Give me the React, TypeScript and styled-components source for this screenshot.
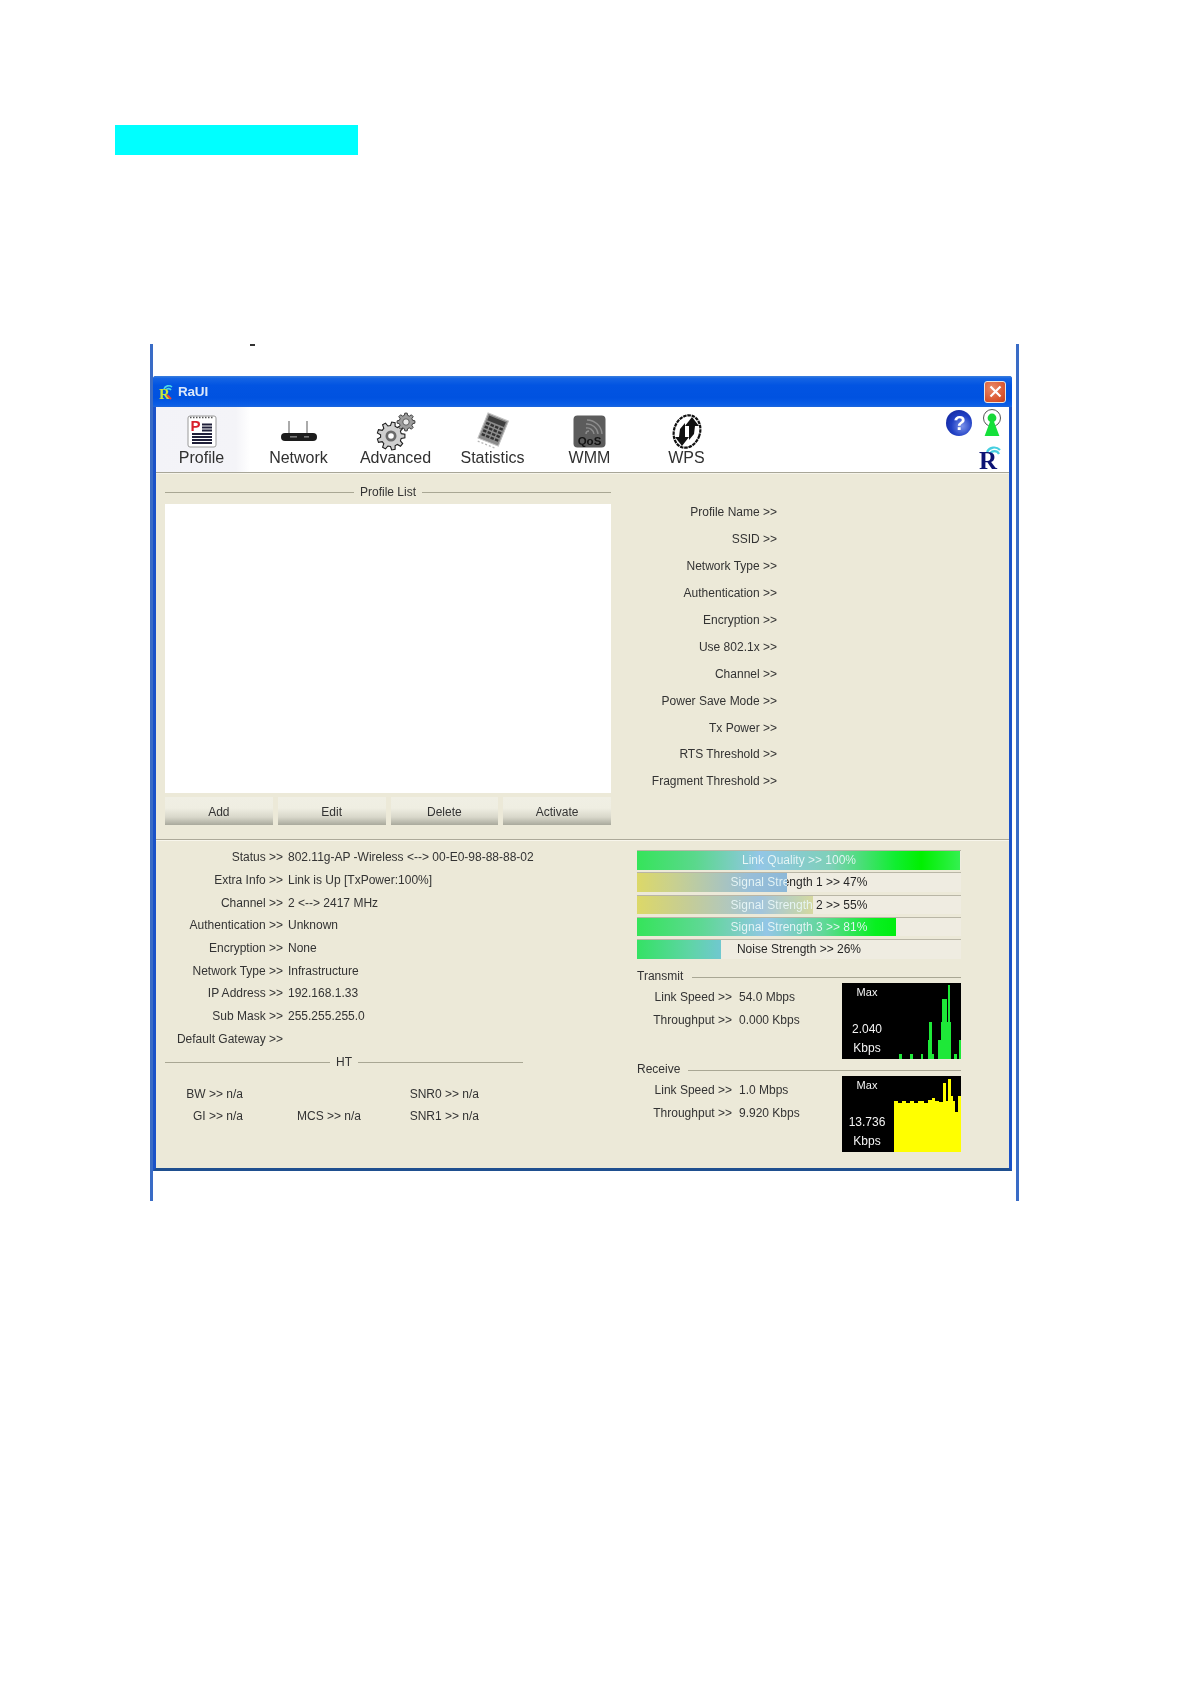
import React from "react";
import styled, { createGlobalStyle } from "styled-components";

const Global = createGlobalStyle`
  html, body { margin: 0; padding: 0; background: #fff; }
  body { font-family: "Liberation Sans", Arial, sans-serif; color: #2a2a2a; }
  * { box-sizing: border-box; }
  svg { overflow: visible; }
`;

const Page = styled.div`
  height: 1684px;
  padding-top: 125px;
  overflow: hidden;
`;
const Highlight = styled.div`
  margin-left: 115px;
  width: 243px;
  height: 30px;
  background: #00ffff;
`;
const Frame = styled.div`
  position: relative;
  margin: 189px 0 0 150px;
  width: 869px;
  height: 857px;
  padding-top: 32px;
  border-left: 3px solid #3a6cc6;
  border-right: 3px solid #3a6cc6;
`;
const Dash = styled.span`
  position: absolute;
  left: 97px;
  top: 0;
  width: 5px;
  height: 2px;
  background: #333;
`;
const Window = styled.div`
  width: 859px;
  height: 795px;
  display: flex;
  flex-direction: column;
  border: 3px solid #1b52c8;
  border-top: 0;
  border-bottom-color: #1f4f8f;
  border-radius: 3px 3px 0 0;
  background: #ece9d8;
  filter: blur(0.35px);
`;
const TitleBar = styled.div`
  flex: none;
  height: 31px;
  margin: 0 -3px;
  padding: 0 6px 0 5px;
  display: flex;
  align-items: center;
  gap: 2px;
  border-radius: 3px 3px 0 0;
  background: linear-gradient(180deg, #3c7fdc 0, #1464e4 8%, #0254e2 30%, #0052e0 70%, #0a5de6 92%, #1c66dc 100%);
`;
const TitleText = styled.span`
  color: #dce8fa;
  font-size: 13.5px;
  font-weight: 700;
  letter-spacing: -0.2px;
`;
const Close = styled.div`
  margin-left: auto;
  width: 22px;
  height: 22px;
  display: flex;
  align-items: center;
  justify-content: center;
  border: 1px solid #e8e4e0;
  border-radius: 3px;
  background: radial-gradient(circle at 35% 30%, #ea8a68, #d8532c 70%, #c2401c);
`;
const Toolbar = styled.div`
  flex: none;
  height: 66px;
  display: flex;
  background: #fff;
  border-bottom: 1px solid #a8a698;
  box-shadow: 0 1px 0 #f6f4ea;
`;
const Tab = styled.div<{ $active?: boolean }>`
  width: ${(p) => (p.$active ? "94px" : "97px")};
  padding-right: ${(p) => (p.$active ? "3px" : "0")};
  display: flex;
  flex-direction: column;
  align-items: center;
  background: ${(p) => (p.$active ? "linear-gradient(90deg,#f3f3f8,#f4f4f8 85%,#ffffff)" : "transparent")};
`;
const TabIcon = styled.div`
  height: 41px;
  padding-top: 8px;
  display: flex;
  align-items: center;
  justify-content: center;
`;
const TabLabel = styled.div`
  margin-top: 1px;
  font-size: 16px;
  line-height: 18px;
  color: #303030;
  white-space: nowrap;
`;
const ToolRight = styled.div`
  margin-left: auto;
  width: 64px;
  display: grid;
  grid-template-columns: 37px 1fr;
  grid-template-rows: 34px 1fr;
  padding-top: 2px;
  justify-items: start;
`;
const RLogoCell = styled.div`
  grid-column: 2;
  margin-left: -4px;
`;
const Upper = styled.div`
  flex: none;
  height: 367px;
  display: flex;
  padding: 12px 0 0 9px;
  border-bottom: 1px solid #aca999;
  box-shadow: 0 1px 0 #f8f6ec;
`;
const ListCol = styled.div`
  width: 446px;
  flex: none;
`;
const Legend = styled.div`
  height: 14px;
  display: flex;
  align-items: center;
  gap: 6px;
  font-size: 12px;
  color: #333;
`;
const Rule = styled.span<{ $down?: number }>`
  flex: 1;
  height: 1px;
  background: #a9a794;
  margin-top: ${(p) => p.$down ?? 0}px;
`;
const ListBox = styled.div`
  margin-top: 5px;
  height: 289px;
  background: #fff;
`;
const Buttons = styled.div`
  margin-top: 4px;
  display: grid;
  grid-template-columns: repeat(4, 1fr);
  gap: 5px;
`;
const Btn = styled.div`
  height: 28px;
  padding-top: 1px;
  display: flex;
  align-items: center;
  justify-content: center;
  font-size: 12px;
  color: #333;
  background: linear-gradient(180deg, #f0efe4 0, #efeee2 40%, #d8d7ca 72%, #a9a99c 100%);
`;
const InfoCol = styled.div`
  width: 166px;
  padding-top: 14px;
  display: grid;
  grid-auto-rows: 26.9px;
  align-items: center;
  text-align: right;
  font-size: 12px;
  color: #333;
`;
const Lower = styled.div`
  flex: 1;
  display: flex;
  padding: 6px 0 0 9px;
`;
const StatusCol = styled.div`
  width: 358px;
  flex: none;
  font-size: 12px;
`;
const StatusRow = styled.div`
  height: 22.7px;
  display: grid;
  grid-template-columns: 118px auto;
  column-gap: 5px;
  align-items: center;
  white-space: nowrap;
  color: #333;
`;
const RowLabel = styled.span`
  text-align: right;
`;
const HtLegend = styled(Legend)`
  margin-top: 5px;
`;
const HtGrid = styled.div`
  margin-top: 13px;
  display: grid;
  grid-template-columns: 78px 118px 118px;
  grid-auto-rows: 22.8px;
  align-items: center;
  text-align: right;
  color: #333;
`;
const MeterCol = styled.div`
  width: 324px;
  margin-left: 114px;
  padding-top: 4px;
  font-size: 12px;
`;
const Bars = styled.div`
  display: grid;
  row-gap: 2.75px;
`;
const Bar = styled.div`
  position: relative;
  height: 19.5px;
  line-height: 19px;
  background: #efece1;
  border-top: 1px solid #b9b6a6;
  white-space: nowrap;
`;
const kinds: Record<string, string> = {
  link: "linear-gradient(90deg,#35e45a 0,#5ad88c 18%,#93c6e6 38%,#7ed0b8 60%,#10ee30 80%,#00f000 88%,#34f050 100%)",
  s1: "linear-gradient(90deg,#dcd868 0,#c8d090 25%,#98bed8 75%,#8cb8d8 100%)",
  s2: "linear-gradient(90deg,#dcd868 0,#c4cc98 30%,#a2c4dc 70%,#c4d4b0 92%,#d6d8a0 100%)",
  s3: "linear-gradient(90deg,#35e45a 0,#5ed894 25%,#93c6e6 50%,#60d898 72%,#08f020 92%,#00ee10 100%)",
  noise: "linear-gradient(90deg,#34e264 0,#60d4a8 65%,#70c8d0 100%)",
};
const Fill = styled.div<{ $kind: string }>`
  position: absolute;
  left: 0;
  top: 0;
  bottom: 0;
  background: ${(p) => kinds[p.$kind]};
`;
/* One text, lying over the fill; its colour changes where the fill ends. */
const BarText = styled.div`
  position: relative;
  text-align: center;
  color: transparent;
  -webkit-background-clip: text;
  background-clip: text;
`;
const MeterHead = styled(Legend)`
  gap: 9px;
  margin-top: 10px;
`;
const RecvHead = styled(MeterHead)`
  margin-top: 3px;
  gap: 8px;
`;
const MeterBody = styled.div`
  display: flex;
`;
const Rates = styled.div`
  width: 205px;
  flex: none;
  padding-top: 3px;
`;
const RateRow = styled.div`
  height: 22.8px;
  display: grid;
  grid-template-columns: 95px auto;
  column-gap: 7px;
  align-items: center;
  white-space: nowrap;
  color: #333;
`;
const Graph = styled.div`
  position: relative;
  width: 119px;
  height: 76px;
  background: #000;
`;
const GraphSvg = styled.svg`
  position: absolute;
  inset: 0;
  display: block;
`;
const GraphLabels = styled.div`
  position: relative;
  width: 50px;
  height: 100%;
  display: flex;
  flex-direction: column;
  align-items: center;
  color: #f4f4f4;
  font-size: 12px;
  line-height: 16px;
`;
const GraphMax = styled.span`
  margin-top: 1px;
  font-size: 11px;
`;
const GraphValue = styled.span`
  margin-top: 21px;
`;
const GraphUnit = styled.span`
  margin-top: 3px;
`;

/* Icons */
function gearPoints(cx: number, cy: number, ro: number, ri: number, n: number) {
  const pts: string[] = [];
  for (let i = 0; i < n; i++) {
    const a = (i / n) * Math.PI * 2;
    const w = (Math.PI / n) * 0.5;
    [
      [ri, a - w * 1.3],
      [ro, a - w * 0.7],
      [ro, a + w * 0.7],
      [ri, a + w * 1.3],
    ].forEach(([r, t]) => pts.push(`${(cx + r * Math.cos(t)).toFixed(1)},${(cy + r * Math.sin(t)).toFixed(1)}`));
  }
  return pts.join(" ");
}

const ProfileIcon = () => (
  <svg width="30" height="33" viewBox="0 0 30 33">
    <rect x="1" y="1" width="28" height="31" rx="2" fill="#fff" stroke="#9a9a9a" />
    <path d="M3 2.5h24" stroke="#555" strokeWidth="1.4" strokeDasharray="1.5 1.5" />
    <text x="3.5" y="16" fontFamily="Liberation Sans" fontWeight="700" fontSize="15" fill="#d8202c">P</text>
    <path d="M15 9.5h10M15 12.5h10M15 15.5h10M5 19h20M5 22h20M5 25h20M5 28h20" stroke="#20203a" strokeWidth="1.8" />
  </svg>
);
const NetworkIcon = () => (
  <svg width="38" height="24" viewBox="0 0 38 24">
    <path d="M9 1v13M27 1v13" stroke="#888" strokeWidth="1.4" />
    <rect x="1" y="13" width="36" height="8" rx="4" fill="#1c1c1c" />
    <rect x="10" y="16" width="7" height="1.6" fill="#777" />
    <rect x="24" y="16" width="5" height="1.6" fill="#777" />
  </svg>
);
const AdvancedIcon = () => (
  <svg width="38" height="38" viewBox="0 0 38 38">
    <polygon points={gearPoints(14, 23, 14, 10.5, 9)} fill="#cfcfcf" stroke="#1e1e1e" strokeWidth="1.1" />
    <circle cx="14" cy="23" r="5.5" fill="#6a6a6a" />
    <circle cx="14" cy="23" r="2.8" fill="#fff" />
    <polygon points={gearPoints(29, 9, 9, 6.8, 8)} fill="#9c9c9c" stroke="#333" strokeWidth="0.9" />
    <circle cx="29" cy="9" r="3.2" fill="#e8e8e8" stroke="#444" strokeWidth="0.8" />
  </svg>
);
const StatsIcon = () => (
  <svg width="36" height="36" viewBox="0 0 36 36">
    <g transform="rotate(22 18 16)">
      <rect x="7" y="2" width="22" height="27" fill="#8c8c8c" stroke="#c4c4c4" />
      <rect x="9" y="4" width="18" height="5" fill="#3e3e3e" />
      <path d="M9 12h18M9 16h18M9 20h18M9 24h18" stroke="#333" strokeWidth="2.4" strokeDasharray="3.5 1.3" />
      <path d="M8 32h20" stroke="#b8b8b8" strokeWidth="1.2" strokeDasharray="2 2" />
    </g>
  </svg>
);
const WmmIcon = () => (
  <svg width="33" height="33" viewBox="0 0 33 33">
    <rect x="0.5" y="0.5" width="32" height="32" rx="4" fill="#5c5c5c" />
    <g fill="none" stroke="#8e8e8e" strokeWidth="1.4">
      <path d="M13 19a3 3 0 0 1 3 -3" />
      <path d="M13 13a7 7 0 0 1 8 6" />
      <path d="M13 9a11 11 0 0 1 12 10" />
      <path d="M14 5a15 15 0 0 1 15 14" />
    </g>
    <text x="16.5" y="30" textAnchor="middle" fontFamily="Liberation Sans" fontWeight="700" fontSize="11.5" fill="#141414">QoS</text>
  </svg>
);
const WpsIcon = () => (
  <svg width="32" height="37" viewBox="0 0 32 37">
    <ellipse cx="16" cy="18.5" rx="13" ry="16.5" transform="rotate(18 16 18.5)" fill="#fff" stroke="#111" strokeWidth="2.2" strokeDasharray="3.5 0.8" />
    <path d="M21 4l7 9h-4l-1 8-5 6 0-14h-4z" fill="#111" />
    <path d="M11 33l-7-9h4l1-8 5-6 0 14h4z" fill="#111" />
  </svg>
);
const HelpIcon = () => (
  <svg width="28" height="28" viewBox="0 0 28 28">
    <defs>
      <radialGradient id="helpball" cx="0.62" cy="0.62" r="0.75">
        <stop offset="0" stopColor="#7a92ea" />
        <stop offset="0.55" stopColor="#2040c4" />
        <stop offset="1" stopColor="#12249c" />
      </radialGradient>
    </defs>
    <circle cx="14" cy="14" r="13" fill="url(#helpball)" />
    <text x="14.5" y="21" textAnchor="middle" fontFamily="Liberation Sans" fontWeight="700" fontSize="20" fill="#fff">?</text>
  </svg>
);
const SignalIcon = () => (
  <svg width="20" height="28" viewBox="0 0 20 28">
    <circle cx="10" cy="9" r="8.5" fill="#fff" stroke="#555" strokeWidth="1" />
    <circle cx="10" cy="9" r="4.4" fill="#18d838" />
    <path d="M8.6 11h2.8l6 16H2.6z" fill="#14e03a" />
  </svg>
);
const RLogo = () => (
  <svg width="26" height="28" viewBox="0 0 26 28">
    <path d="M9 9a8 8 0 0 1 13 -2M12 11a5 5 0 0 1 9 0" fill="none" stroke="#46cfe0" strokeWidth="2.2" />
    <text x="1" y="26" fontFamily="Liberation Serif" fontWeight="700" fontSize="25" fill="#0c1474">R</text>
  </svg>
);
const TitleIcon = () => (
  <svg width="18" height="18" viewBox="0 0 18 18">
    <path d="M6 6a5 5 0 0 1 8 -2M8 7a3 3 0 0 1 5 0" fill="none" stroke="#4ad8e8" strokeWidth="1.6" />
    <text x="1" y="16" fontFamily="Liberation Serif" fontWeight="700" fontSize="15" fill="#c8e838">R</text>
    <path d="M9 12l4 4" stroke="#f04830" strokeWidth="2" />
  </svg>
);
const CloseX = () => (
  <svg width="13" height="13" viewBox="0 0 13 13">
    <path d="M1.5 1.5l10 10M11.5 1.5l-10 10" stroke="#fff" strokeWidth="2.2" />
  </svg>
);

const tabs = [
  { label: "Profile", icon: <ProfileIcon />, active: true },
  { label: "Network", icon: <NetworkIcon /> },
  { label: "Advanced", icon: <AdvancedIcon /> },
  { label: "Statistics", icon: <StatsIcon /> },
  { label: "WMM", icon: <WmmIcon /> },
  { label: "WPS", icon: <WpsIcon /> },
];
const info = [
  "Profile Name >>", "SSID >>", "Network Type >>", "Authentication >>", "Encryption >>", "Use 802.1x >>",
  "Channel >>", "Power Save Mode >>", "Tx Power >>", "RTS Threshold >>", "Fragment Threshold >>",
];
const status = [
  ["Status >>", "802.11g-AP -Wireless  <--> 00-E0-98-88-88-02"],
  ["Extra Info >>", "Link is Up  [TxPower:100%]"],
  ["Channel >>", "2 <--> 2417 MHz"],
  ["Authentication >>", "Unknown"],
  ["Encryption >>", "None"],
  ["Network Type >>", "Infrastructure"],
  ["IP Address >>", "192.168.1.33"],
  ["Sub Mask >>", "255.255.255.0"],
  ["Default Gateway >>", ""],
];
const bars = [
  { text: "Link Quality >> 100%", kind: "link", px: 323 },
  { text: "Signal Strength 1 >> 47%", kind: "s1", px: 150 },
  { text: "Signal Strength 2 >> 55%", kind: "s2", px: 176 },
  { text: "Signal Strength 3 >> 81%", kind: "s3", px: 259 },
  { text: "Noise Strength >> 26%", kind: "noise", px: 84 },
];
const txBars: [number, number, number][] = [
  [57, 60, 71], [68, 71, 71], [79, 81, 71], [86, 90, 57], [87, 90, 39], [90, 92, 71], [96, 99, 57],
  [99, 105, 39], [100, 105, 16], [105, 109, 39], [106, 108, 2], [112, 115, 71], [117, 119, 57],
];
const rxPath =
  "M52 76V25H56V27H60V25H64V27H68V25H72V27H76V25H82V27H86V24H90V22H93V25H97V26H101V7H104V25H106V3H109V20H111V25H113V36H116V20H119V76Z";

function GraphBox({ value, children }: { value: string; children: React.ReactNode }) {
  return (
    <Graph>
      <GraphSvg width="119" height="76" viewBox="0 0 119 76">{children}</GraphSvg>
      <GraphLabels>
        <GraphMax>Max</GraphMax>
        <GraphValue>{value}</GraphValue>
        <GraphUnit>Kbps</GraphUnit>
      </GraphLabels>
    </Graph>
  );
}

export default function App() {
  return (
    <Page>
      <Global />
      <Highlight />
      <Frame>
        <Dash />
        <Window>
          <TitleBar>
            <TitleIcon />
            <TitleText>RaUI</TitleText>
            <Close><CloseX /></Close>
          </TitleBar>
          <Toolbar>
            {tabs.map((t) => (
              <Tab key={t.label} $active={t.active}>
                <TabIcon>{t.icon}</TabIcon>
                <TabLabel>{t.label}</TabLabel>
              </Tab>
            ))}
            <ToolRight>
              <HelpIcon />
              <SignalIcon />
              <RLogoCell><RLogo /></RLogoCell>
            </ToolRight>
          </Toolbar>
          <Upper>
            <ListCol>
              <Legend>
                <Rule />
                Profile List
                <Rule />
              </Legend>
              <ListBox />
              <Buttons>
                {["Add", "Edit", "Delete", "Activate"].map((b) => (
                  <Btn key={b}>{b}</Btn>
                ))}
              </Buttons>
            </ListCol>
            <InfoCol>
              {info.map((i) => (
                <div key={i}>{i}</div>
              ))}
            </InfoCol>
          </Upper>
          <Lower>
            <StatusCol>
              {status.map(([l, v]) => (
                <StatusRow key={l}>
                  <RowLabel>{l}</RowLabel>
                  <span>{v}</span>
                </StatusRow>
              ))}
              <HtLegend>
                <Rule />
                HT
                <Rule />
              </HtLegend>
              <HtGrid>
                <span>BW &gt;&gt; n/a</span>
                <span />
                <span>SNR0 &gt;&gt; n/a</span>
                <span>GI &gt;&gt; n/a</span>
                <span>MCS &gt;&gt; n/a</span>
                <span>SNR1 &gt;&gt; n/a</span>
              </HtGrid>
            </StatusCol>
            <MeterCol>
              <Bars>
                {bars.map((b) => (
                  <Bar key={b.text}>
                    <Fill $kind={b.kind} style={{ width: b.px }} />
                    <BarText
                      style={{
                        backgroundImage: `linear-gradient(90deg, #e8f6f6 ${b.px}px, #222 ${b.px}px)`,
                      }}
                    >
                      {b.text}
                    </BarText>
                  </Bar>
                ))}
              </Bars>
              <MeterHead>
                Transmit
                <Rule $down={4} />
              </MeterHead>
              <MeterBody>
                <Rates>
                  <RateRow><RowLabel>Link Speed &gt;&gt;</RowLabel><span>54.0 Mbps</span></RateRow>
                  <RateRow><RowLabel>Throughput &gt;&gt;</RowLabel><span>0.000 Kbps</span></RateRow>
                </Rates>
                <GraphBox value="2.040">
                  {txBars.map(([a, b, top]) => (
                    <rect key={`${a}-${top}`} x={a} y={top} width={b - a} height={76 - top} fill="#1ee838" />
                  ))}
                </GraphBox>
              </MeterBody>
              <RecvHead>
                Receive
                <Rule $down={4} />
              </RecvHead>
              <MeterBody>
                <Rates>
                  <RateRow><RowLabel>Link Speed &gt;&gt;</RowLabel><span>1.0 Mbps</span></RateRow>
                  <RateRow><RowLabel>Throughput &gt;&gt;</RowLabel><span>9.920 Kbps</span></RateRow>
                </Rates>
                <GraphBox value="13.736">
                  <path d={rxPath} fill="#ffff00" />
                </GraphBox>
              </MeterBody>
            </MeterCol>
          </Lower>
        </Window>
      </Frame>
    </Page>
  );
}
